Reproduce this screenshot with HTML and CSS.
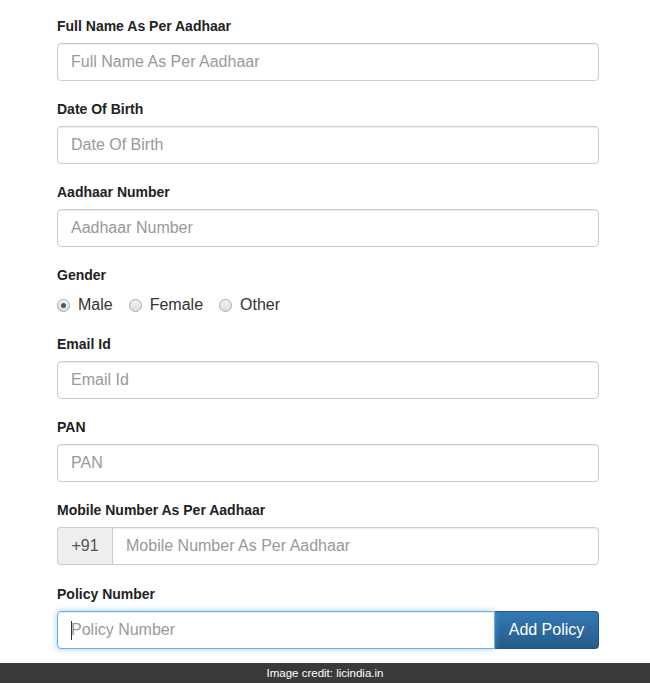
FILE: index.html
```html
<!DOCTYPE html>
<html>
<head>
<meta charset="utf-8">
<link rel="stylesheet" href="styles.css">
</head>
<body>
<div class="page">
  <form class="form">
    <div class="group">
      <label class="label">Full Name As Per Aadhaar</label>
      <input class="control" type="text" placeholder="Full Name As Per Aadhaar">
    </div>
    <div class="group">
      <label class="label">Date Of Birth</label>
      <input class="control" type="text" placeholder="Date Of Birth">
    </div>
    <div class="group">
      <label class="label">Aadhaar Number</label>
      <input class="control" type="text" placeholder="Aadhaar Number">
    </div>
    <div class="group">
      <label class="label">Gender</label>
      <div class="radios">
        <span class="radio"><span class="dot checked"></span>Male</span>
        <span class="radio"><span class="dot"></span>Female</span>
        <span class="radio"><span class="dot"></span>Other</span>
      </div>
    </div>
    <div class="group">
      <label class="label">Email Id</label>
      <input class="control" type="text" placeholder="Email Id">
    </div>
    <div class="group">
      <label class="label">PAN</label>
      <input class="control" type="text" placeholder="PAN">
    </div>
    <div class="group">
      <label class="label">Mobile Number As Per Aadhaar</label>
      <div class="input-group">
        <span class="addon">+91</span>
        <input class="control joined-left" type="text" placeholder="Mobile Number As Per Aadhaar">
      </div>
    </div>
    <div class="group last">
      <label class="label">Policy Number</label>
      <div class="input-group">
        <div class="focus-wrap">
          <input class="control focused joined-right" type="text" placeholder="Policy Number">
          <span class="caret"></span>
        </div>
        <button class="btn" type="button">Add Policy</button>
      </div>
    </div>
  </form>
  <div class="credit">Image credit: licindia.in</div>
</div>
</body>
</html>
```

FILE: styles.css
```css
* { box-sizing: border-box; }
html, body {
  margin: 0;
  padding: 0;
  background: #fff;
  font-family: "Liberation Sans", Arial, sans-serif;
  color: #333;
}
.page {
  width: 650px;
  height: 683px;
  display: flex;
  flex-direction: column;
  overflow: hidden;
}
.form {
  flex: 1;
  padding: 16px 51px 0 57px;
  display: flex;
  flex-direction: column;
  gap: 18px;
}
.group {
  display: flex;
  flex-direction: column;
}
.group.last { margin-top: 1px; }
.label {
  font-size: 14px;
  font-weight: bold;
  line-height: 20px;
  color: #222;
  margin-bottom: 7px;
}
.control {
  display: block;
  width: 100%;
  height: 38px;
  padding: 0 13px;
  font-family: "Liberation Sans", Arial, sans-serif;
  font-size: 16px;
  color: #555;
  background: #fff;
  border: 1px solid #ccc;
  border-radius: 4px;
  box-shadow: inset 0 1px 1px rgba(0,0,0,0.075);
  outline: none;
}
.control::placeholder { color: #999; }
.focused {
  border-color: #66afe9;
  box-shadow: inset 0 1px 1px rgba(0,0,0,.075), 0 0 6px rgba(102,175,233,.6);
}
.radios {
  display: flex;
  align-items: center;
  height: 20px;
  margin-top: 3px;
  margin-bottom: 1px;
  font-size: 16px;
  color: #333;
}
.radio {
  display: flex;
  align-items: center;
  margin-right: 16px;
}
.dot {
  width: 13px;
  height: 13px;
  border-radius: 50%;
  border: 1px solid #a9a9a9;
  background: linear-gradient(#f4f4f4, #dcdcdc);
  margin-right: 8px;
  display: flex;
  align-items: center;
  justify-content: center;
}
.dot.checked::after {
  content: "";
  width: 5px;
  height: 5px;
  border-radius: 50%;
  background: #555;
}
.input-group {
  display: flex;
  width: 100%;
}
.addon {
  flex: 0 0 55px;
  height: 38px;
  display: flex;
  align-items: center;
  justify-content: center;
  font-size: 16px;
  color: #555;
  background: #eee;
  border: 1px solid #ccc;
  border-right: 0;
  border-radius: 4px 0 0 4px;
}
.joined-left {
  flex: 1;
  border-radius: 0 4px 4px 0;
}
.focus-wrap {
  flex: 1;
  position: relative;
}
.joined-right {
  border-radius: 4px 0 0 4px;
}
.caret {
  position: absolute;
  left: 14px;
  top: 10px;
  width: 1px;
  height: 19px;
  background: #333;
}
.btn {
  flex: 0 0 104px;
  height: 38px;
  font-family: "Liberation Sans", Arial, sans-serif;
  font-size: 16px;
  color: #fff;
  background: linear-gradient(#337ab7, #265a88);
  border: 1px solid #245580;
  border-left: 0;
  border-radius: 0 4px 4px 0;
  padding: 0;
}
.credit {
  height: 20px;
  flex: 0 0 20px;
  background: #3a3a3a;
  color: #fff;
  font-size: 11.5px;
  line-height: 20px;
  text-align: center;
}
```
